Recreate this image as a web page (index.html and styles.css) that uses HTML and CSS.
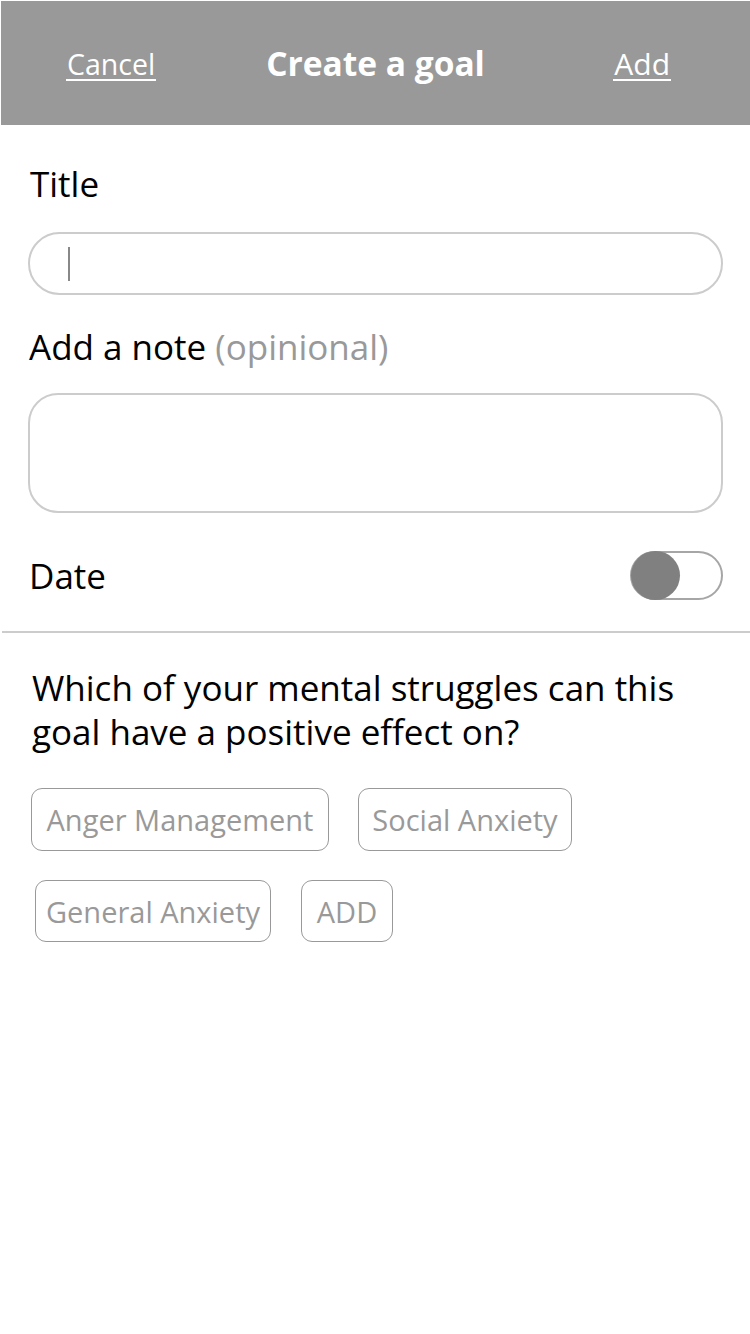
FILE: index.html
```html
<!DOCTYPE html>
<html lang="en">
<head>
<meta charset="utf-8">
<title>Create a goal</title>
<link rel="stylesheet" href="styles.css">
</head>
<body>
<div class="app">
  <header class="topbar">
    <span class="topbar-link topbar-cancel">Cancel</span>
    <h1 class="topbar-title">Create a goal</h1>
    <span class="topbar-link topbar-add">Add</span>
  </header>

  <section class="form">
    <label class="field-label field-label-title">Title</label>
    <div class="input-pill"><span class="caret"></span></div>

    <label class="field-label field-label-note">Add a note <span class="muted">(opinional)</span></label>
    <div class="input-box"></div>

    <div class="date-row">
      <span class="field-label">Date</span>
      <div class="toggle"><span class="toggle-knob"></span></div>
    </div>
  </section>

  <hr class="divider">

  <section class="struggles">
    <p class="question">Which of your mental struggles can this<br>goal have a positive effect on?</p>
    <div class="chip-row">
      <span class="chip chip-anger">Anger Management</span>
      <span class="chip chip-social">Social Anxiety</span>
    </div>
    <div class="chip-row chip-row-second">
      <span class="chip chip-general">General Anxiety</span>
      <span class="chip chip-add">ADD</span>
    </div>
  </section>
</div>
</body>
</html>
```
FILE: styles.css
```css
* { box-sizing: border-box; }
html, body { margin: 0; padding: 0; background: #fff; }
body {
  font-family: "Open Sans", "Lato", "Liberation Sans", sans-serif;
  color: #000;
}
.app { width: 750px; min-height: 1334px; background: #fff; }

.topbar {
  margin: 1px 0 0 1px;
  height: 124px;
  background: #999999;
  display: grid;
  grid-template-columns: 1fr auto 1fr;
  align-items: center;
  color: #fff;
}
.topbar-link {
  font-size: 28.5px;
  line-height: 30px;
  border-bottom: 2px solid #fff;
  padding: 0 1px;
  margin-top: 4px;
}
.topbar-cancel { justify-self: start; margin-left: 65px; }
.topbar-add { justify-self: end; margin-right: 79px; font-size: 30px; }
.topbar-title {
  margin: 0;
  font-size: 33.5px;
  font-weight: 700;
  line-height: 40px;
}

.form { padding: 0 27px 0 28px; }
.field-label { display: block; font-size: 35px; line-height: 40px; }
.field-label-title { margin: 39px 0 0 2px; }
.muted { color: #999; }

.input-pill {
  margin-top: 28px;
  height: 63px;
  border: 2px solid #cccccc;
  border-radius: 32px;
  display: flex;
  align-items: center;
  padding-left: 38px;
}
.caret { width: 2px; height: 34px; background: #888; }

.field-label-note { margin: 32px 0 0 1px; }

.input-box {
  margin-top: 26px;
  height: 120px;
  border: 2px solid #cccccc;
  border-radius: 30px;
}

.date-row {
  margin-top: 38px;
  height: 49px;
  display: flex;
  align-items: center;
  justify-content: space-between;
  padding-left: 1px;
}
.toggle {
  width: 93px;
  height: 49px;
  border: 2px solid #a6a6a6;
  border-radius: 25px;
  position: relative;
}
.toggle-knob {
  position: absolute;
  left: -1px;
  top: -2px;
  width: 49px;
  height: 49px;
  border-radius: 50%;
  background: #808080;
}

.divider {
  margin: 31px 0 0 2px;
  border: 0;
  height: 2px;
  background: #cccccc;
}

.struggles { padding: 0 0 0 31px; }
.question {
  margin: 33px 0 0 1px;
  font-size: 35px;
  line-height: 44px;
}
.chip-row { display: flex; gap: 29px; margin-top: 34px; }
.chip-row-second { margin-top: 29px; padding-left: 4px; gap: 30px; }
.chip {
  height: 63px;
  border: 1.5px solid #999;
  border-radius: 11px;
  color: #999;
  font-size: 29px;
  white-space: nowrap;
  display: flex;
  align-items: center;
  justify-content: center;
  padding: 0 4px;
}
.chip-row-second .chip { height: 62px; }
.chip-anger { width: 298px; }
.chip-social { width: 214px; }
.chip-general { width: 236px; }
.chip-add { width: 92px; }
```
